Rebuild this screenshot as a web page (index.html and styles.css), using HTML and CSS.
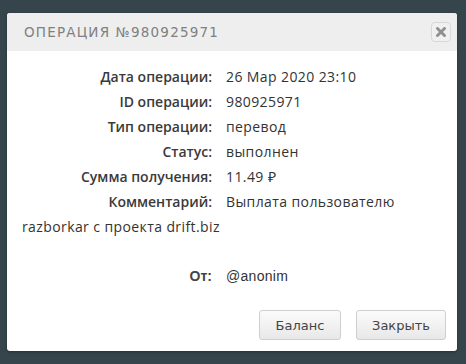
FILE: index.html
```html
<!DOCTYPE html>
<html lang="ru">
<head>
<meta charset="utf-8">
<link rel="stylesheet" href="styles.css">
</head>
<body>
<div class="dialog">
  <div class="dialog-header">
    <span class="dialog-title">ОПЕРАЦИЯ №980925971</span>
    <button class="close-btn" aria-label="Закрыть">
      <svg width="10" height="10" viewBox="0 0 10 10"><path d="M1.5 1.5 L8.5 8.5 M8.5 1.5 L1.5 8.5" stroke="#8f8f8f" stroke-width="2.8" stroke-linecap="square"/></svg>
    </button>
  </div>
  <div class="dialog-body">
    <div class="row"><span class="label">Дата операции:</span><span class="value">26 Мар 2020 23:10</span></div>
    <div class="row"><span class="label">ID операции:</span><span class="value">980925971</span></div>
    <div class="row"><span class="label">Тип операции:</span><span class="value">перевод</span></div>
    <div class="row"><span class="label">Статус:</span><span class="value">выполнен</span></div>
    <div class="row"><span class="label">Сумма получения:</span><span class="value">11.49 ₽</span></div>
    <div class="row"><span class="label">Комментарий:</span><span class="value">Выплата пользователю</span> <span class="value nowrap">razborkar с проекта drift.biz</span></div>
    <div class="row spacer"></div>
    <div class="row from"><span class="label">От:</span><span class="value">@anonim</span></div>
  </div>
  <div class="dialog-footer">
    <button class="btn">Баланс</button>
    <button class="btn">Закрыть</button>
  </div>
</div>
</body>
</html>
```
FILE: styles.css
```css
html, body {
  margin: 0;
  padding: 0;
  background: #36444c;
  width: 466px;
  height: 364px;
  overflow: hidden;
}
body {
  padding: 13px 9px 0 7px;
  box-sizing: border-box;
}
.dialog {
  width: 450px;
  height: 338px;
  background: #fff;
  border-radius: 3px;
  box-shadow: 0 1px 3px rgba(0,0,0,0.3);
  display: flex;
  flex-direction: column;
  overflow: hidden;
}
.dialog-header {
  height: 38px;
  background: #eeeeee;
  display: flex;
  align-items: center;
  justify-content: space-between;
  padding: 0 6px 0 17px;
  flex-shrink: 0;
}
.dialog-title {
  font-family: "DejaVu Sans", sans-serif;
  font-size: 13.5px;
  letter-spacing: 1.2px;
  color: #808080;
  font-weight: normal;
}
.close-btn {
  width: 20px;
  height: 20px;
  padding: 0;
  border: 1px solid #d8d8d8;
  border-radius: 4px;
  background: #f0f0f0;
  display: flex;
  align-items: center;
  justify-content: center;
}
.dialog-body {
  padding: 13px 15px 0 15px;
  font-family: "Open Sans", sans-serif;
  font-size: 14px;
  color: #333;
  letter-spacing: 0.4px;
  flex: 1;
}
.row {
  line-height: 25px;
}
.spacer {
  height: 25px;
}
.label {
  display: inline-block;
  width: 190px;
  text-align: right;
  font-weight: 600;
  letter-spacing: 0;
  color: #3a3a3a;
  margin-right: 14px;
}
.nowrap {
  white-space: nowrap;
}
.from {
  font-family: "Liberation Sans", sans-serif;
  letter-spacing: 0.3px;
}
.from .label {
  font-weight: bold;
  color: #444;
}
.dialog-footer {
  display: flex;
  justify-content: flex-end;
  gap: 15px;
  padding: 0 11px 11px 0;
}
.btn {
  height: 30px;
  padding: 0 14px;
  border: 1px solid #cfcfcf;
  border-radius: 3px;
  background: linear-gradient(#fbfbfb, #e8e8e8);
  font-family: "DejaVu Sans", sans-serif;
  font-size: 13px;
  color: #444;
}
.btn:first-child { width: 82px; }
.btn:last-child { width: 90px; }
```
